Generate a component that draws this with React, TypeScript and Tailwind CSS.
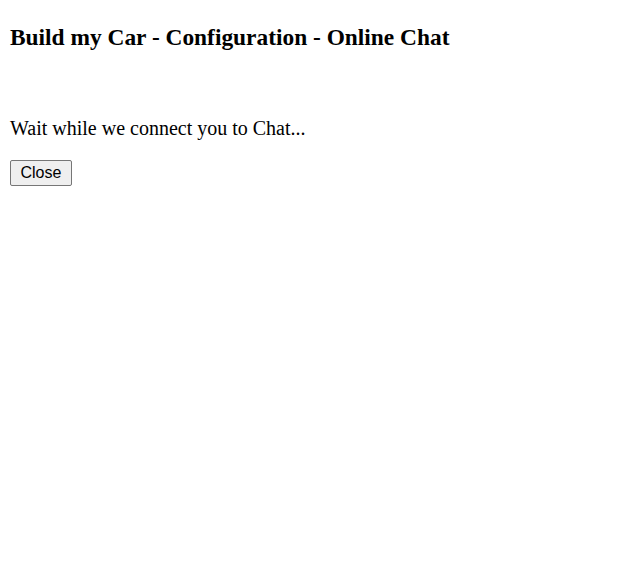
export default function App() {
  return (
    <div className="min-h-[574px] bg-white p-[10px] text-black font-['Liberation_Serif',serif]">
      <h3 className="mt-[14px] text-[23.4px] font-bold leading-[26px]">
        Build my Car - Configuration - Online Chat
      </h3>
      <p className="mt-[66px] text-[20px] leading-[24px]">Wait while we connect you to Chat...</p>
      <button className="mt-[20px] h-[26px] px-[9.5px] border border-[#767676] rounded-[2px] bg-[#efefef] text-[16px] font-['Liberation_Sans',sans-serif] leading-none">
        Close
      </button>
    </div>
  );
}
